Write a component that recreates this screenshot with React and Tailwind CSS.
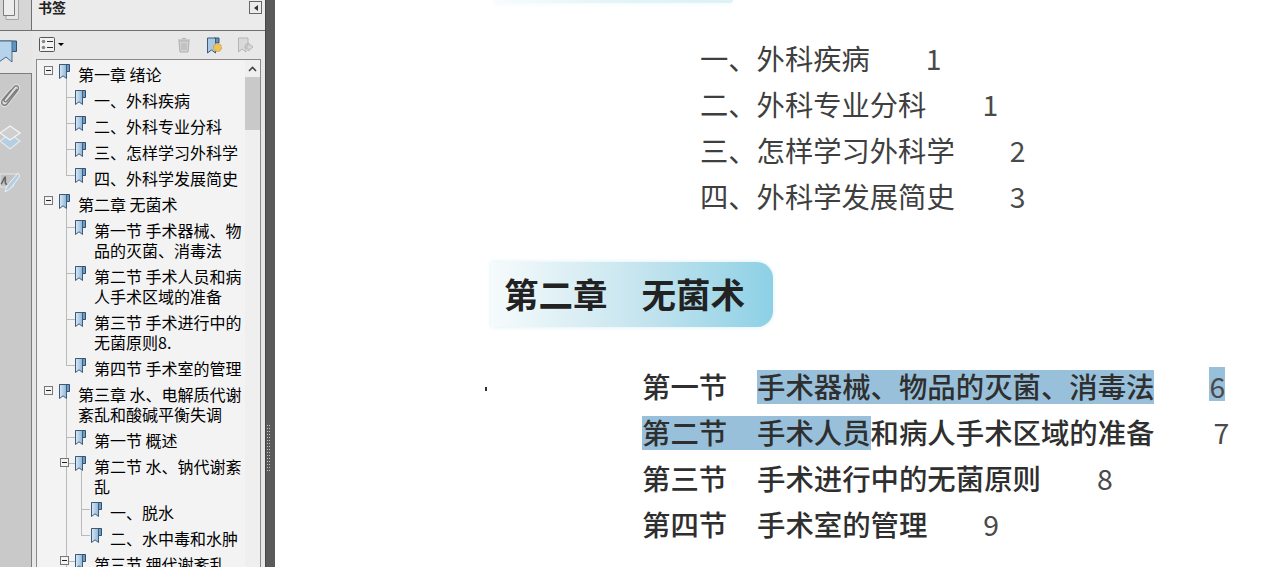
import React from "react";

const CJK = { fontFamily: '"Noto Sans CJK SC", "Noto Sans", sans-serif' };

function Bookmark() {
  return (
    <svg width="13" height="17" viewBox="0 0 13 17" className="shrink-0">
      <defs>
        <linearGradient id="bmk" x1="0" y1="0" x2="1" y2="0">
          <stop offset="0" stopColor="#dbe9f5" />
          <stop offset="1" stopColor="#8db7d9" />
        </linearGradient>
      </defs>
      <path d="M1.5 1.5H11.5V8.5H8.5" fill="#6f9cc0" stroke="#2f4f6f" strokeWidth="1" />
      <path d="M1.5 1.5H8.5V15.5L5 12.8L1.5 15.5Z" fill="url(#bmk)" stroke="#3d5a78" strokeWidth="1" />
    </svg>
  );
}

function Toggle() {
  return (
    <span className="w-[9px] h-[9px] border border-[#777777] bg-[#f4f4f4] flex items-center justify-center shrink-0">
      <span className="w-[5px] h-px bg-[#222222]" />
    </span>
  );
}

const rows = [
  { l: 0, t: "第一章 绪论", toggle: true, tail: [29] },
  { l: 1, t: "一、外科疾病", full: [29] },
  { l: 1, t: "二、外科专业分科", full: [29] },
  { l: 1, t: "三、怎样学习外科学", full: [29] },
  { l: 1, t: "四、外科学发展简史", last: 29 },
  { l: 0, t: "第二章 无菌术", toggle: true, tail: [29] },
  { l: 1, t: "第一节 手术器械、物品的灭菌、消毒法", full: [29] },
  { l: 1, t: "第二节 手术人员和病人手术区域的准备", full: [29] },
  { l: 1, t: "第三节 手术进行中的无菌原则8.", full: [29] },
  { l: 1, t: "第四节 手术室的管理", last: 29 },
  { l: 0, t: "第三章 水、电解质代谢紊乱和酸碱平衡失调", toggle: true, tail: [29] },
  { l: 1, t: "第一节 概述", full: [29] },
  { l: 1, t: "第二节 水、钠代谢紊乱", toggle: true, full: [29], tail: [44] },
  { l: 2, t: "一、脱水", full: [29, 44] },
  { l: 2, t: "二、水中毒和水肿", full: [29], last: 44 },
  { l: 1, t: "第三节 钾代谢紊乱", toggle: true, full: [29] },
];

function TreeRow({ r }) {
  const indent = r.l * 16;
  const elbowX = r.l === 1 ? 29 : 44;
  return (
    <div className="relative flex pb-[6px]" style={{ paddingLeft: indent + 7 }}>
      {(r.full || []).map((x) => (
        <span key={x} className="absolute top-0 bottom-0 w-px bg-[#b9b9b9]" style={{ left: x }} />
      ))}
      {r.last != null && (
        <span className="absolute top-0 h-[8px] w-px bg-[#b9b9b9]" style={{ left: r.last }} />
      )}
      {(r.tail || []).map((x) => (
        <span key={x} className="absolute top-[15px] bottom-0 w-px bg-[#b9b9b9]" style={{ left: x }} />
      ))}
      {r.l > 0 && (
        <span className="absolute top-[7px] h-px w-[9px] bg-[#b9b9b9]" style={{ left: elbowX }} />
      )}
      <span className="relative w-[14px] h-[14px] shrink-0 flex items-start pt-[2px]">
        {r.toggle && <Toggle />}
      </span>
      <span className="relative -mt-[1px] shrink-0 w-[20px]">
        <Bookmark />
      </span>
      <span className="relative flex-1 min-w-0 text-[16px] leading-[20px] text-black">{r.t}</span>
    </div>
  );
}

function RailIcons() {
  return (
    <div className="flex-1 flex flex-col items-start bg-[#c9c9c9] border-t border-r border-[#7d7d7d] w-[32px] pt-[10px]">
      <svg width="20" height="24" viewBox="0 0 20 24">
        <path d="M17 5L7 17c-1.5 2-4 0-2.5-2L14 3c2.5-3 6 0 3.5 3.5L7 20c-2.5 3-7 0-4.5-4L11 6" fill="none" stroke="#e2e2e2" strokeWidth="3.4" />
        <path d="M17 5L7 17c-1.5 2-4 0-2.5-2L14 3c2.5-3 6 0 3.5 3.5L7 20c-2.5 3-7 0-4.5-4L11 6" fill="none" stroke="#7f7f7f" strokeWidth="1.4" />
      </svg>
      <svg width="21" height="25" viewBox="0 0 21 25" className="mt-[17px]">
        <path d="M10 9L20 16L10 24L0 16Z" fill="#b4cfe4" stroke="#e8e8e8" strokeWidth="1.2" />
        <path d="M10 1L20 8L10 15L0 8Z" fill="#cfcfcf" stroke="#f2f2f2" strokeWidth="1.4" />
      </svg>
      <svg width="20" height="21" viewBox="0 0 20 21" className="mt-[22px]">
        <path d="M0 2H17L13 15H0Z" fill="#c2c2c2" stroke="#e6e6e6" />
        <path d="M1 12c2-1 3-7 4-7s-1 8 2 7" fill="none" stroke="#666666" strokeWidth="1.6" />
        <path d="M18 1L7 14L5 20L10 17L20 4Z" fill="#b4cfe4" stroke="#efefef" />
      </svg>
    </div>
  );
}

function Sidebar() {
  return (
    <div className="flex shrink-0 h-full bg-[#e8e8e8]" style={CJK}>
      <div className="w-[32px] shrink-0 flex flex-col">
        <div className="h-[31px] shrink-0 bg-[#d6d6d6] border-b border-r border-[#6f6f6f] overflow-hidden">
          <svg width="20" height="21" viewBox="0 0 20 21">
            <path d="M6 4V19.5H18.5V-2" fill="#e6e6e6" stroke="#a6a6a6" />
            <path d="M3.5 -5H14.5V15.5H3.5Z" fill="#ededed" stroke="#7d7d7d" />
          </svg>
        </div>
        <div className="h-[42px] shrink-0 bg-[#e6e6e6] flex items-start pt-[9px] overflow-visible">
          <svg width="18" height="24" viewBox="0 0 18 24" className="shrink-0">
            <path d="M0 1H16.5V11.5H12" fill="#5e94bf" stroke="#33526f" />
            <path d="M-1 1H12V22L6 17L-1 22Z" fill="#b5d3ea" stroke="#4b6a88" />
          </svg>
        </div>
        <RailIcons />
      </div>
      <div className="w-[233px] shrink-0 flex flex-col">
        <div className="h-[31px] shrink-0 border-b border-[#6f6f6f] bg-[#ebebeb] flex items-start justify-between pl-[6px] pr-[3px] overflow-hidden">
          <span className="text-[14px] font-bold leading-[14px] text-[#222222]">书签</span>
          <span className="w-[13px] h-[13px] mt-[1px] border border-[#666666] flex items-center justify-center">
            <span className="w-0 h-0 border-y-[3px] border-y-transparent border-r-[4px] border-r-[#333333]" />
          </span>
        </div>
        <div className="h-[28px] shrink-0 flex items-center pl-[7px] pr-[11px]">
          <svg width="16" height="15" viewBox="0 0 16 15" className="mb-[2px]">
            <rect x="0.5" y="0.5" width="15" height="14" rx="1" fill="#f2f2f2" stroke="#555555" />
            <circle cx="4.5" cy="4.5" r="1.8" fill="#888888" />
            <circle cx="4.5" cy="10.5" r="1.8" fill="#888888" />
            <path d="M8 4.5H14M8 10.5H14" stroke="#333333" />
          </svg>
          <span className="ml-[3px] mb-[2px] w-0 h-0 border-x-[3px] border-x-transparent border-t-[3px] border-t-black" />
          <svg width="14" height="16" viewBox="0 0 14 16" className="ml-auto">
            <path d="M2 4H12L11 15H3Z" fill="#d4d4d4" stroke="#b0b0b0" />
            <path d="M1 3H13M5 1.5H9M5 6V13M7 6V13M9 6V13" stroke="#b0b0b0" />
          </svg>
          <svg width="17" height="17" viewBox="0 0 17 17" className="ml-[15px]">
            <path d="M8 1H13V6H8Z" fill="#5e94bf" stroke="#33526f" />
            <path d="M1.5 1H9.5V16L5.5 13L1.5 16Z" fill="#a9c9e4" stroke="#3d5a78" />
            <circle cx="11.5" cy="10.5" r="4" fill="#eec35a" stroke="#c69a34" strokeDasharray="2 1" />
          </svg>
          <svg width="17" height="17" viewBox="0 0 17 17" className="ml-[14px]">
            <path d="M1.5 1H11V7H9V15L5 12L1.5 15Z" fill="#dadada" stroke="#b5b5b5" />
            <path d="M8 9H11V6L16 10L11 14V11H8Z" fill="#d8d8d8" stroke="#b5b5b5" />
          </svg>
        </div>
        <div className="flex-1 min-h-0 ml-[4px] mr-[4px] border-l border-t border-r border-[#8a8a8a] bg-[#f3f3f3] flex overflow-hidden">
          <div className="flex-1 min-w-0 pt-[4px] overflow-hidden">
            {rows.map((r, i) => (
              <TreeRow key={i} r={r} />
            ))}
          </div>
          <div className="w-[15px] shrink-0 bg-[#efefef] flex flex-col">
            <div className="h-[17px] flex items-center justify-center">
              <svg width="9" height="6" viewBox="0 0 9 6">
                <path d="M1 5L4.5 1.5L8 5" fill="none" stroke="#444444" strokeWidth="1.6" />
              </svg>
            </div>
            <div className="h-[53px] bg-[#c9c9c9]" />
          </div>
        </div>
      </div>
      <div className="w-[10px] shrink-0 h-full bg-[#5a5a5a] border-l border-[#464646] flex items-start pt-[425px] pl-[1px] gap-px">
        <div className="h-[47px] w-px bg-[repeating-linear-gradient(180deg,#c4c4c4_0,#c4c4c4_1px,transparent_1px,transparent_3px)]" />
        <div className="h-[47px] w-px bg-[repeating-linear-gradient(180deg,#c4c4c4_0,#c4c4c4_1px,transparent_1px,transparent_3px)]" />
      </div>
    </div>
  );
}

function Entry({ children, num, gap }) {
  return (
    <div className="h-[46px] flex items-center text-[28.3px] text-[#3f3f3f] leading-[34px] whitespace-nowrap">
      <span>{children}</span>
      <span className="text-[#4a4a4a]" style={{ marginLeft: gap }}>{num}</span>
    </div>
  );
}

function Section({ a, b, c, num, gap, hlA, hlB, hlNum }) {
  const base = "leading-[32px] pb-[2px]";
  return (
    <div className="h-[46px] flex items-center text-[28.4px] font-medium text-[#2f2f2f] whitespace-nowrap">
      <span className={hlA ? `${base} w-[85px] bg-[#99c0da]` : `${base} w-[85px]`}>{a}</span>
      <span className={hlA ? "w-[30px] h-[34px] bg-[#99c0da]" : "w-[30px]"} />
      <span className={hlB ? `${base} bg-[#99c0da]` : base}>{b}</span>
      <span className={base}>{c}</span>
      <span
        className={
          hlNum
            ? "w-[16px] bg-[#99c0da] font-normal text-[#4a4a4a] -mt-[6px] pt-[5px] pb-[1px] leading-[28px]"
            : `${base} font-normal text-[#4a4a4a]`
        }
        style={{ marginLeft: gap }}
      >
        {num}
      </span>
    </div>
  );
}

export default function App() {
  return (
    <div className="w-[1271px] h-[567px] overflow-hidden flex bg-white" style={CJK}>
      <Sidebar />
      <div className="flex-1 min-w-0 flex flex-col bg-white">
        <div className="h-[3px] ml-[218px] w-[240px] shrink-0 rounded-b-[3px] bg-gradient-to-r from-[#f8fcfd] via-[#e4f4f7] to-[#dcf2f6] shadow-[0_1px_4px_#eef8fa]" />
        <div className="ml-[425px] pt-[32px] shrink-0">
          <Entry num="1" gap={56}>一、外科疾病</Entry>
          <Entry num="1" gap={56}>二、外科专业分科</Entry>
          <Entry num="2" gap={55}>三、怎样学习外科学</Entry>
          <Entry num="3" gap={55}>四、外科学发展简史</Entry>
        </div>
        <div className="ml-[216px] mt-[43px] h-[65px] w-[282px] shrink-0 rounded-r-[16px] bg-gradient-to-r from-[#f6fbfc] via-[#c8e6ef] to-[#8dd0e5] shadow-[0_0_4px_#d5edf4] flex items-center pl-[13px] pb-[3px] text-[34.5px] font-bold text-[#222222] leading-none whitespace-nowrap">
          <span>第二章</span>
          <span className="ml-[34px]">无菌术</span>
        </div>
        <div className="relative ml-[367px] mt-[37px] shrink-0">
          <span className="absolute left-[-157px] top-[23px] w-[2px] h-[4px] bg-[#333333]" />
          <Section a="第一节" b="手术器械、物品的灭菌、消毒法" c="" num="6" gap={55} hlB hlNum />
          <Section a="第二节" b="手术人员" c="和病人手术区域的准备" num="7" gap={59} hlA hlB />
          <Section a="第三节" b="手术进行中的无菌原则" c="" num="8" gap={56} />
          <Section a="第四节" b="手术室的管理" c="" num="9" gap={56} />
        </div>
      </div>
    </div>
  );
}
